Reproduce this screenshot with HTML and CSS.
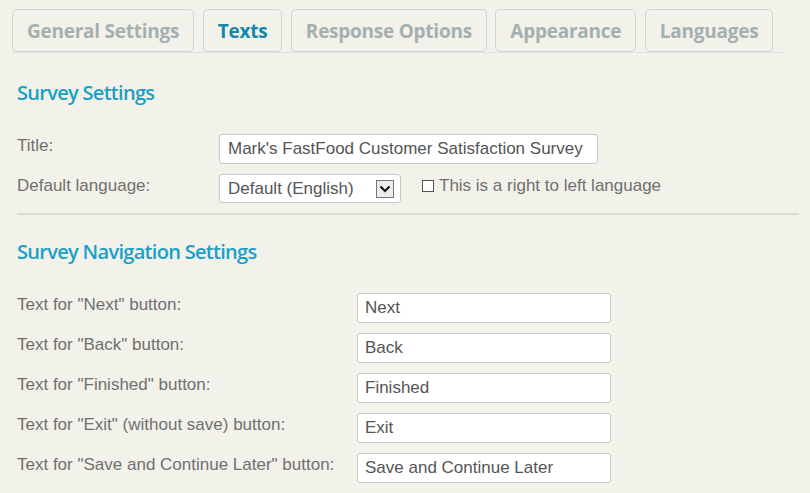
FILE: index.html
```html
<!DOCTYPE html>
<html>
<head>
<meta charset="utf-8">
<link rel="stylesheet" href="styles.css">
</head>
<body>
<div class="page">
  <div class="tabs">
    <div class="tab">General Settings</div>
    <div class="tab active">Texts</div>
    <div class="tab">Response Options</div>
    <div class="tab">Appearance</div>
    <div class="tab">Languages</div>
  </div>

  <div class="content">
    <h2 class="heading first">Survey Settings</h2>
    <div class="form survey">
      <label class="label">Title:</label>
      <div class="field"><div class="input wide">Mark's FastFood Customer Satisfaction Survey</div></div>
      <label class="label">Default language:</label>
      <div class="field">
        <div class="select">
          <span>Default (English)</span>
          <span class="arrow"><svg width="12" height="8" viewBox="0 0 12 8"><path d="M1.5 1.5 L6 6 L10.5 1.5" fill="none" stroke="#111" stroke-width="2"/></svg></span>
        </div>
        <span class="rtl"><span class="checkbox"></span>This is a right to left language</span>
      </div>
    </div>

    <div class="divider"></div>

    <h2 class="heading">Survey Navigation Settings</h2>
    <div class="form nav">
      <label class="label">Text for "Next" button:</label>
      <div class="field"><div class="input">Next</div></div>
      <label class="label">Text for "Back" button:</label>
      <div class="field"><div class="input">Back</div></div>
      <label class="label">Text for "Finished" button:</label>
      <div class="field"><div class="input">Finished</div></div>
      <label class="label">Text for "Exit" (without save) button:</label>
      <div class="field"><div class="input">Exit</div></div>
      <label class="label">Text for "Save and Continue Later" button:</label>
      <div class="field"><div class="input">Save and Continue Later</div></div>
    </div>
  </div>
</div>
</body>
</html>
```

FILE: styles.css
```css
html, body {
  margin: 0;
  padding: 0;
  background: #f2f1ea;
}

.page {
  width: 810px;
  height: 493px;
  overflow: hidden;
}

.tabs {
  display: flex;
  gap: 8.5px;
  margin-left: 12px;
  width: 774px;
  padding-top: 9px;
  border-bottom: 1px solid #dde3e1;
  box-sizing: border-box;
}

.tab {
  height: 43px;
  box-sizing: border-box;
  padding: 0 14px;
  border: 1.5px solid #cdd6d6;
  border-radius: 5px;
  display: flex;
  align-items: center;
  font-family: "Open Sans", sans-serif;
  font-weight: 700;
  font-size: 19px;
  color: #a4b0b0;
  letter-spacing: -0.25px;
}

.tab.active {
  color: #1488aa;
}

.content {
  padding: 0 11px 0 17px;
}

.heading {
  margin: 0;
  font-family: "Open Sans", sans-serif;
  font-weight: 600;
  font-size: 20px;
  color: #1aa0c8;
  letter-spacing: -0.7px;
  line-height: 26px;
}

.heading.first {
  padding-top: 27px;
}

.form {
  display: grid;
  row-gap: 10px;
  font-family: "Liberation Sans", Arial, sans-serif;
}

.form.survey {
  grid-template-columns: 202px 1fr;
  margin-top: 28px;
}

.form.nav {
  grid-template-columns: 340px 1fr;
  margin-top: 28px;
}

.label {
  font-size: 17px;
  color: #707070;
  padding-top: 2px;
  line-height: 20px;
}

.field {
  display: flex;
  align-items: center;
}

.input {
  width: 254px;
  height: 30px;
  box-sizing: border-box;
  background: #fff;
  border: 1px solid #c9c9c9;
  border-radius: 3px;
  padding: 0 7px;
  font-size: 17px;
  color: #555;
  display: flex;
  align-items: center;
}

.input.wide {
  width: 379px;
  padding-left: 8px;
}

.select {
  width: 182px;
  height: 29px;
  box-sizing: border-box;
  background: #fff;
  border: 1px solid #c9c9c9;
  border-radius: 3px;
  padding: 0 6px 0 8px;
  font-size: 17px;
  color: #555;
  display: flex;
  align-items: center;
  justify-content: space-between;
}

.arrow {
  width: 18px;
  height: 18px;
  box-sizing: border-box;
  border: 1px solid #777;
  background: #ececec;
  display: flex;
  align-items: center;
  justify-content: center;
}

.rtl {
  margin-left: 21px;
  font-size: 17px;
  color: #707070;
  display: flex;
  align-items: center;
  margin-top: -6px;
}

.checkbox {
  width: 12px;
  height: 12px;
  box-sizing: border-box;
  border: 1px solid #555;
  background: #fff;
  margin-right: 5px;
}

.divider {
  height: 2px;
  background: #dcdbd3;
  margin-top: 10px;
  margin-bottom: 24px;
}
```
